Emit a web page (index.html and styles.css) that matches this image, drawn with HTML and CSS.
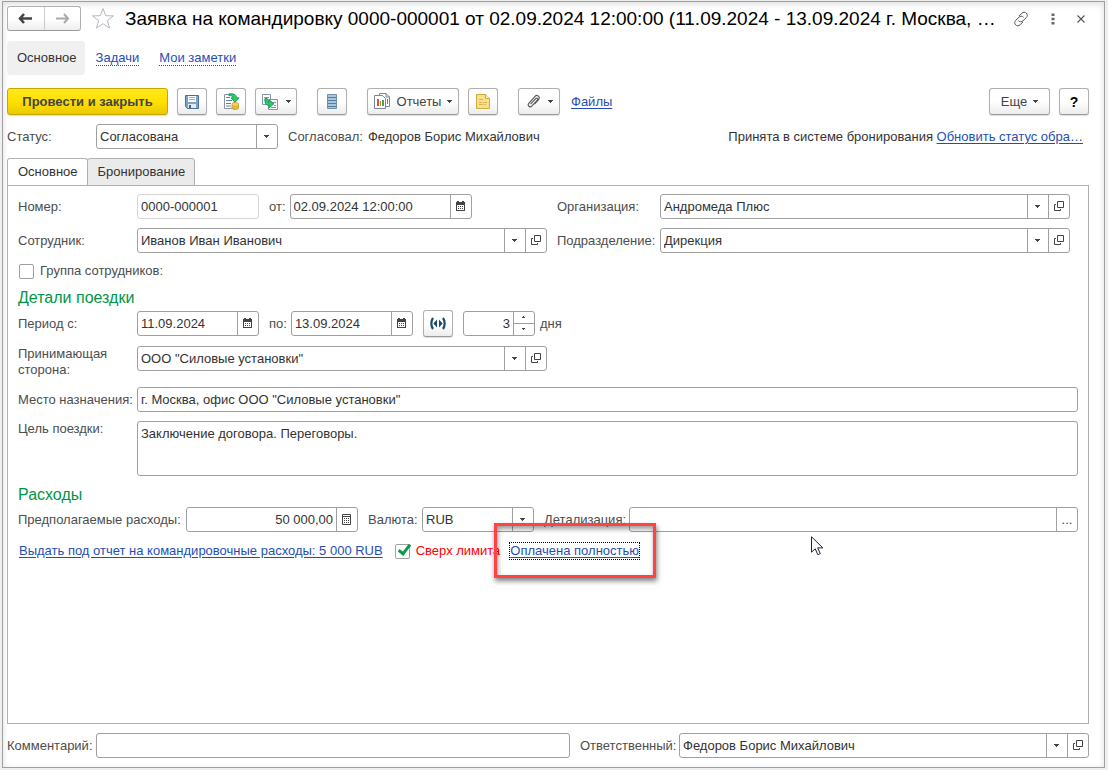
FILE: index.html
```html
<!DOCTYPE html>
<html lang="ru">
<head>
<meta charset="utf-8">
<title>Заявка на командировку</title>
<meta name="viewport" content="width=device-width, initial-scale=1">
<link rel="stylesheet" href="styles.css">
</head>
<body>
<svg class="sprite" aria-hidden="true">
  <symbol id="i-down" viewBox="0 0 5 5"><path d="M0 1h5v1H0zM1 2h3v1H1zM2 3h1v1H2z" fill="#444"/></symbol>
  <symbol id="i-open" viewBox="0 0 10 11"><path d="M3.500 .5h6v6h-6zM2 3.500H.5v6h6V8" fill="none" stroke="#444" stroke-width="1"/></symbol>
  <symbol id="i-cal" viewBox="0 0 10 11"><path d="M0 1h9v9H0zM1 4v5h7V4z" fill="#444" fill-rule="evenodd"/><path d="M1 0h2v2H1zM6 0h2v2H6z" fill="#444"/><path d="M2 5h1v1H2zM4 5h1v1H4zM6 5h1v1H6zM2 7h1v1H2zM4 7h1v1H4zM6 7h1v1H6z" fill="#444"/></symbol>
  <symbol id="i-calc" viewBox="0 0 10 11"><path d="M.5 .5h8v10h-8zM.5 2.500h8" fill="none" stroke="#444"/><path d="M2 4h1v1H2zM4 4h1v1H4zM6 4h1v1H6zM2 6h1v1H2zM4 6h1v1H4zM6 6h1v1H6zM2 8h1v1H2zM4 8h1v1H4zM6 8h1v1H6z" fill="#444"/></symbol>
</svg>

<main class="window">
  <header class="titlebar">
    <div class="history">
      <button class="history-btn" aria-label="Назад"><svg width="15" height="11" viewBox="0 0 15 11"><path d="M6 1 2 5.500l4 4.500M2 5.500h12" fill="none" stroke="#444" stroke-width="2.600"/></svg></button>
      <button class="history-btn" aria-label="Вперед"><svg width="15" height="11" viewBox="0 0 15 11"><path d="m9 1 4 4.500L9 10M13 5.500H1" fill="none" stroke="#aaa" stroke-width="2"/></svg></button>
    </div>
    <button class="plain star" aria-label="В избранное"><svg width="24" height="23" viewBox="0 0 24 23"><path d="m12 1.500 2.700 7.200 7.800.2-6.200 4.700 2.300 7.500L12 16.700l-6.600 4.400 2.300-7.500L1.500 8.900l7.800-.2z" fill="#fff" stroke="#b4b9c1"/></svg></button>
    <h1 class="title">Заявка на командировку 0000-000001 от 02.09.2024 12:00:00 (11.09.2024 - 13.09.2024 г. Москва, …</h1>
    <div class="title-tools">
      <button class="plain" aria-label="Получить ссылку"><svg width="16" height="16" viewBox="0 0 16 16"><g fill="none" stroke="#555" stroke-linecap="round"><path d="M6.300 4.800 8.900 2.200c1.300-1.300 3.300-1.300 4.500-.1s1.200 3.200-.1 4.500L10 9.800c-1.300 1.300-3.200 1.300-4.300.2"/><path d="M9.700 11.200l-2.600 2.600c-1.300 1.300-3.300 1.300-4.500.1s-1.200-3.200.1-4.500L6 6.200c1.300-1.300 3.200-1.300 4.300-.2"/></g></svg></button>
      <button class="plain" aria-label="Меню"><svg width="4" height="12" viewBox="0 0 4 12"><path d="M.5 .5h3v2.500h-3zM.5 4.700h3v2.500h-3zM.5 9h3v2.500h-3z" fill="#666"/></svg></button>
      <button class="plain" aria-label="Закрыть"><svg width="8" height="8" viewBox="0 0 8 8"><path d="m.5.5 7 7m0-7-7 7" stroke="#555" stroke-width="1.100"/></svg></button>
    </div>
  </header>

  <nav class="sections">
    <span class="section-current">Основное</span>
    <a class="section-link" href="#tasks">Задачи</a>
    <a class="section-link" href="#notes">Мои заметки</a>
  </nav>

  <div class="toolbar">
    <div class="group">
      <button class="btn btn-main">Провести и закрыть</button>
      <button class="btn btn-icon" aria-label="Записать"><svg width="16" height="16" viewBox="0 0 16 16"><path d="M1.500 1.500h13v13h-11l-2-2z" fill="#7ba3cc" stroke="#4a7096"/><path d="M4 2h8v6H4z" fill="#fff"/><path d="M5 3.500h6M5 5.500h6" stroke="#8fa9c2"/><path d="M4 10h8v4H4z" fill="#e4ebf2"/><path d="M5 11h2v3H5z" fill="#3f6488"/></svg></button>
      <button class="btn btn-icon" aria-label="Провести"><svg width="17" height="17" viewBox="0 0 17 17"><path d="M1.500 1.500h10v14h-10z" fill="#fff" stroke="#8496a9"/><path d="M3 4.500h4M3 7.500h6M3 10.500h5M3 13h5" stroke="#6e8297"/><path d="M6 .8c4-.6 7.200.6 7.700 4H16l-4 4.600L8 4.800h2.300C9.900 3 8.300 2.500 6 2.800z" fill="#24cf6b" stroke="#138a4b" stroke-width=".8"/><path d="M9 11c0-2 6.500-2 6.500 0v4c0 2-6.500 2-6.500 0z" fill="#f4d160" stroke="#c59a20" stroke-width=".8"/><path d="M9 12.500c1 1.300 5.500 1.300 6.500 0M9 14.300c1 1.300 5.500 1.300 6.500 0" fill="none" stroke="#c59a20" stroke-width=".8"/></svg></button>
      <button class="btn btn-menu" aria-label="Создать на основании"><svg width="18" height="18" viewBox="0 0 18 18"><path d="M1.500 1.500h8v10h-8z" fill="#fff" stroke="#8496a9"/><path d="M3 4.500h5M3 7h3" stroke="#8496a9"/><path d="M7.500 6.500h9v10h-9z" fill="#fff" stroke="#8496a9"/><path d="M12 9.500h3M13 12.500h2M10 14.500h5" stroke="#8496a9"/><path d="M4 5.500v2.800c0 2.600 1.500 4 4 4V15l5-4.300-5-4v2.500c-1.300 0-1.700-.6-1.700-1.700V5.500z" fill="#24cf6b" stroke="#138a4b" stroke-width=".8"/></svg><svg width="5" height="5"><use href="#i-down"/></svg></button>
    </div>
    <button class="btn btn-icon" aria-label="Журнал"><svg width="10" height="15" viewBox="0 0 10 15"><path d="M.5 .5h9v14h-9z" fill="#a9c6dc" stroke="#6b91ae"/><path d="M1 3.500h8M1 6.500h8M1 9.500h8M1 12.500h8" stroke="#547c9c"/></svg></button>
    <div class="group">
      <button class="btn btn-reports"><svg width="17" height="17" viewBox="0 0 17 17"><path d="M5.500 .5H12l3.500 3.500v9.500h-10z" fill="#fff" stroke="#76889a"/><path d="M12 .5v3.500h3.500" fill="none" stroke="#76889a"/><path d="M13 6h1v5h-1z" fill="#37a852"/><path d="M.5 2.500h8l3 3v10H.5z" fill="#fff" stroke="#76889a"/><path d="M3 6h2v7H3z" fill="#df4b3e"/><path d="M6 8h1v5H6z" fill="#e07b37"/><path d="M8 7h2v6H8z" fill="#37a852"/></svg>Отчеты<svg width="5" height="5"><use href="#i-down"/></svg></button>
      <button class="btn btn-icon" aria-label="Заметка"><svg width="14" height="15" viewBox="0 0 14 15"><path d="M.5 .5h9l4 4v10H.5z" fill="#f7df8c" stroke="#d1a93d"/><path d="M9.500 .5v4h4" fill="#fff0b8" stroke="#d1a93d"/><path d="M3 5.500h4M3 8.500h3m1 0h4M3 10.500h4m1 0h2" stroke="#d9b654"/></svg></button>
    </div>
    <div class="group">
      <button class="btn btn-menu" aria-label="Присоединенные файлы"><svg width="15" height="15" viewBox="0 0 15 15"><path d="M4.600 10.200 9.700 4.600c1-1.100 2.600.3 1.600 1.500l-5.500 6.100c-1.700 1.800-4.800-.8-3-2.900l6.300-7c2-2.200 5.500.7 3.500 3.200L8.500 10" fill="none" stroke="#5a5a5a" stroke-width="1.200"/></svg><svg width="5" height="5"><use href="#i-down"/></svg></button>
      <a class="link files" href="#files">Файлы</a>
    </div>
    <div class="group toolbar-end">
      <button class="btn btn-more">Еще<svg width="5" height="5"><use href="#i-down"/></svg></button>
      <button class="btn btn-icon btn-help">?</button>
    </div>
  </div>

  <div class="status">
    <label class="status-label" for="status">Статус:</label>
    <div class="field w-date-long">
      <div class="pick"><select id="status"><option>Согласована</option></select><svg class="pick-icon" width="5" height="5"><use href="#i-down"/></svg></div>
    </div>
    <span class="status-approved"><span class="muted">Согласовал:</span><span>Федоров Борис Михайлович</span></span>
    <span class="status-booking">Принята в системе бронирования <a class="link" href="#refresh">Обновить статус обра…</a></span>
  </div>

  <div class="tabs" role="tablist">
    <button class="tab tab-active" role="tab" aria-selected="true">Основное</button>
    <button class="tab" role="tab" aria-selected="false">Бронирование</button>
  </div>

  <section class="panel">
    <div class="pairs">
      <label for="number">Номер:</label>
      <div class="line">
        <div class="field field-locked w-date"><input id="number" value="0000-000001" readonly></div>
        <label for="date">от:</label>
        <div class="field w-date-long"><input id="date" value="02.09.2024 12:00:00"><button class="side" aria-label="Календарь"><svg width="10" height="11"><use href="#i-cal"/></svg></button></div>
      </div>
      <label class="second" for="org">Организация:</label>
      <div class="field">
        <div class="pick"><select id="org"><option>Андромеда Плюс</option></select><svg class="pick-icon" width="5" height="5"><use href="#i-down"/></svg></div>
        <button class="side" aria-label="Открыть"><svg width="10" height="11"><use href="#i-open"/></svg></button>
      </div>
      <label for="employee">Сотрудник:</label>
      <div class="field">
        <div class="pick"><select id="employee"><option>Иванов Иван Иванович</option></select><svg class="pick-icon" width="5" height="5"><use href="#i-down"/></svg></div>
        <button class="side" aria-label="Открыть"><svg width="10" height="11"><use href="#i-open"/></svg></button>
      </div>
      <label class="second" for="dept">Подразделение:</label>
      <div class="field">
        <div class="pick"><select id="dept"><option>Дирекция</option></select><svg class="pick-icon" width="5" height="5"><use href="#i-down"/></svg></div>
        <button class="side" aria-label="Открыть"><svg width="10" height="11"><use href="#i-open"/></svg></button>
      </div>
    </div>

    <label class="check group-check"><input type="checkbox">Группа сотрудников:</label>

    <h2 class="heading">Детали поездки</h2>
    <div class="pairs">
      <label for="from">Период с:</label>
      <div class="line line-wide">
        <div class="field w-date"><input id="from" value="11.09.2024"><button class="side" aria-label="Календарь"><svg width="10" height="11"><use href="#i-cal"/></svg></button></div>
        <label for="to">по:</label>
        <div class="field w-date"><input id="to" value="13.09.2024"><button class="side" aria-label="Календарь"><svg width="10" height="11"><use href="#i-cal"/></svg></button></div>
        <button class="btn btn-icon btn-period" aria-label="Выбрать период"><svg width="16" height="13" viewBox="0 0 16 13"><path d="M3 1C.8 4 .8 9 3 12M13 1c2.200 3 2.200 8 0 11" fill="none" stroke="#1c4a6e" stroke-width="2.200"/><path d="M7 2.500v8L3.400 6.500zM9 2.500v8l3.600-4z" fill="#1c4a6e"/></svg></button>
        <div class="field w-days"><input id="days" class="num" value="3"><div class="spin"><button aria-label="Больше"><svg width="4" height="3" viewBox="0 0 4 3"><path d="M0 1h3v1H0zM1 0h1v1H1z" fill="#444"/></svg></button><button aria-label="Меньше"><svg width="4" height="3" viewBox="0 0 4 3"><path d="M0 0h3v1H0zM1 1h1v1H1z" fill="#444"/></svg></button></div></div>
        <label class="unit" for="days">дня</label>
      </div>
      <label class="label-top" for="host">Принимающая сторона:</label>
      <div class="field label-top">
        <div class="pick"><select id="host"><option>ООО "Силовые установки"</option></select><svg class="pick-icon" width="5" height="5"><use href="#i-down"/></svg></div>
        <button class="side" aria-label="Открыть"><svg width="10" height="11"><use href="#i-open"/></svg></button>
      </div>
    </div>

    <div class="wide">
      <label for="place">Место назначения:</label>
      <div class="field"><input id="place" value="г. Москва, офис ООО &quot;Силовые установки&quot;"></div>
      <label class="label-top" for="goal">Цель поездки:</label>
      <div class="field field-area"><textarea id="goal">Заключение договора. Переговоры.</textarea></div>
    </div>

    <h2 class="heading">Расходы</h2>
    <div class="costs">
      <label class="costs-label" for="sum">Предполагаемые расходы:</label>
      <div class="field w-sum"><input id="sum" class="num" value="50 000,00"><button class="side" aria-label="Калькулятор"><svg width="10" height="11"><use href="#i-calc"/></svg></button></div>
      <label class="currency-label" for="currency">Валюта:</label>
      <div class="field w-currency"><div class="pick"><select id="currency"><option>RUB</option></select><svg class="pick-icon" width="5" height="5"><use href="#i-down"/></svg></div></div>
      <label class="detail-label" for="detail">Детализация:</label>
      <div class="field grow"><input id="detail"><button class="side dots" aria-label="Выбрать">...</button></div>
    </div>
    <div class="payment">
      <a class="link" href="#advance">Выдать под отчет на командировочные расходы: 5 000 RUB</a>
      <label class="check over"><input type="checkbox" checked>Сверх лимита</label>
      <div class="paid"><a class="link link-focus" href="#paid">Оплачена полностью</a><span class="highlight"></span></div>
      <svg class="cursor" width="13" height="20" viewBox="0 0 13 20"><path d="M.5 .8v15.400l3.700-3.400 2.600 5.900 2.500-1.100-2.600-5.700h5.200z" fill="#fff" stroke="#223"/></svg>
    </div>
  </section>

  <footer class="footer">
    <label for="comment">Комментарий:</label>
    <div class="field"><input id="comment"></div>
    <label class="second" for="owner">Ответственный:</label>
    <div class="field">
      <div class="pick"><select id="owner"><option>Федоров Борис Михайлович</option></select><svg class="pick-icon" width="5" height="5"><use href="#i-down"/></svg></div>
      <button class="side" aria-label="Открыть"><svg width="10" height="11"><use href="#i-open"/></svg></button>
    </div>
  </footer>
</main>
</body>
</html>
```

FILE: styles.css
```css
*, *::before, *::after { box-sizing: border-box; }

body {
  margin: 0;
  padding: 1px 3px 2px 2px;
  min-height: 100vh;
  display: flex;
  background: #efefef;
  color: #333;
  font: 13px/16px "Liberation Sans", Arial, sans-serif;
}

button, input, select, textarea { font: inherit; color: inherit; margin: 0; }
button { padding: 0; cursor: pointer; }
svg { display: block; flex: none; }
label, .muted { color: #4d4d4d; }

.sprite { position: absolute; width: 0; height: 0; }

.window {
  flex: 1;
  min-width: 0;
  display: flex;
  flex-direction: column;
  padding: 4px 15px 9px 4px;
  background: #fff;
  border: 1px solid #a0a0a0;
  box-shadow: inset 0 2px 6px #ddd;
}

/* Title bar */
.titlebar { display: flex; align-items: center; height: 25px; }

.history {
  display: flex;
  width: 74px;
  height: 25px;
  border: 1px solid #b0b0b0;
  border-bottom-color: #999;
  border-radius: 3px;
  background: linear-gradient(#fff 50%, #eee);
}
.history-btn {
  flex: 1;
  display: grid;
  place-items: center;
  border: 0;
  background: none;
}
.history-btn + .history-btn { border-left: 1px solid #ccc; }

.plain { display: grid; place-items: center; border: 0; background: none; }
.star { margin: 0 10px; }

.title {
  flex: 1;
  min-width: 0;
  margin: 0;
  overflow: hidden;
  white-space: nowrap;
  text-overflow: ellipsis;
  font-size: 19px;
  line-height: 25px;
  font-weight: 400;
  color: #000;
}
.title-tools { display: flex; align-items: center; gap: 22px; padding: 0 4px 0 12px; }

/* Section links */
.sections { display: flex; align-items: center; gap: 20px; margin-top: 10px; }
.section-current {
  padding: 9px 8px 9px 10px;
  margin-right: -9px;
  border-radius: 4px;
  background: #f0f0f0;
}
.section-link {
  color: #1f4fb4;
  text-decoration: none;
  line-height: 14px;
  border-bottom: 1px dotted #1f4fb4;
}

.link { color: #1f4fb4; text-underline-offset: 2px; }

/* Toolbar */
.toolbar { display: flex; align-items: center; gap: 20px; margin-top: 13px; }
.group { display: flex; align-items: center; gap: 9px; }
.toolbar-end { margin-left: auto; }
.files { margin-left: 2px; }

.btn {
  display: flex;
  align-items: center;
  justify-content: center;
  height: 27px;
  border: 1px solid #b0b0b0;
  border-bottom-color: #999;
  border-radius: 3px;
  background: linear-gradient(#fff 50%, #ececec);
  box-shadow: 0 1px 1px #ddd;
  color: #444;
}
.btn-main {
  width: 161px;
  border-color: #c5a600;
  background: linear-gradient(#ffe81f, #ffe000 50%, #ecc900);
  font-weight: 700;
}
.btn-icon { width: 30px; }
.btn-menu { width: 42px; gap: 7px; }
.btn-reports { width: 92px; gap: 6px; }
.btn-more { width: 61px; gap: 6px; }
.btn-help { color: #000; font-weight: 700; font-size: 14px; }

/* Fields */
.field {
  display: flex;
  min-width: 0;
  height: 25px;
  border: 1px solid #a0a0a0;
  border-radius: 3px;
  background: #fff;
}
.field-locked { border-color: #d4d4d4; }
.field-area { height: 55px; }
.field input, .field select, .field textarea {
  flex: 1;
  width: 100%;
  min-width: 0;
  padding: 0 3px;
  border: 0;
  border-radius: 3px;
  background: none;
  outline: 0;
  appearance: none;
}
.field textarea { padding-top: 4px; resize: none; }
.field .num { text-align: right; }

.pick { flex: 1; min-width: 0; display: grid; grid-template-columns: minmax(0, 1fr) 21px; }
.pick select { grid-area: 1 / 1 / 2 / 3; }
.pick::after { content: ""; grid-area: 1 / 2; border-left: 1px solid #a0a0a0; pointer-events: none; }
.pick-icon { grid-area: 1 / 2; place-self: center; pointer-events: none; }

.side {
  flex: none;
  width: 21px;
  display: grid;
  place-items: center;
  border: 0;
  border-left: 1px solid #a0a0a0;
  background: none;
}
.spin { display: grid; grid-template-rows: 11px 12px; width: 21px; flex: none; border-left: 1px solid #a0a0a0; }
.spin button { display: grid; place-items: center; border: 0; background: none; }
.spin button + button { border-top: 1px solid #a0a0a0; }

.w-date { width: 122px; }
.w-date-long { width: 182px; }
.w-days { width: 72px; }
.w-sum { width: 172px; }
.w-currency { width: 112px; }
.grow { flex: 1; }

/* Status line */
.status { display: flex; align-items: center; margin-top: 9px; white-space: nowrap; }
.status-label { width: 89px; }
.status-approved { display: flex; gap: 5px; margin-left: 10px; }
.status-booking { margin-left: auto; padding-right: 6px; }

/* Tabs */
.tabs { display: flex; margin: 9px 0 -1px; }
.tab {
  height: 28px;
  padding: 0 9px 0 10px;
  border: 1px solid #b0b0b0;
  border-radius: 3px 3px 0 0;
  background: #ebebeb;
}
.tab + .tab { margin-left: -1px; }
.tab-active { background: #fff; border-bottom-color: #fff; }

.panel { flex: 1; padding: 8px 10px; border: 1px solid #b0b0b0; }

.pairs {
  display: grid;
  grid-template-columns: 119px minmax(0, 1fr) 113px minmax(0, 1fr);
  align-items: center;
  row-gap: 9px;
  padding-right: 8px;
}
.second { padding-left: 10px; }
.line { display: flex; align-items: center; }
.line label { margin: 0 4px 0 10px; }
.line-wide { grid-column: 2 / 5; }
.line .unit { margin-left: 5px; }
.btn-period { margin: 0 10px; }

.check { display: flex; align-items: center; gap: 6px; }
.check input {
  appearance: none;
  position: relative;
  width: 15px;
  height: 15px;
  margin: 0;
  border: 1px solid #a0a0a0;
  border-radius: 2px;
  background: #fff;
}
.check input:checked::after {
  content: "";
  position: absolute;
  left: 5px;
  top: -3px;
  width: 7px;
  height: 13px;
  border: solid #0c9a48;
  border-width: 0 3px 3px 0;
  transform: rotate(38deg);
}
.group-check { width: max-content; margin: 10px 0 0 1px; }

.heading {
  margin: 9px 0 2px;
  font-size: 16px;
  line-height: 20px;
  font-weight: 400;
  color: #009646;
}

.wide {
  display: grid;
  grid-template-columns: 119px minmax(0, 1fr);
  align-items: center;
  row-gap: 9px;
  margin-top: 9px;
}
.label-top { align-self: start; }

.costs { display: flex; align-items: center; white-space: nowrap; }
.costs-label { width: 168px; }
.currency-label { width: 64px; padding-left: 10px; }
.detail-label { width: 95px; padding-left: 10px; }
.dots { color: #444; }

.payment { position: relative; display: flex; align-items: center; margin: 11px 0 0 1px; white-space: nowrap; }
.over { margin-left: 12px; color: #f00; }
.paid { position: relative; margin-left: 10px; }
.link-focus { display: block; outline: 1px dotted #000; }

/* Callout frame drawn over the form */
.highlight {
  position: absolute;
  inset: -20px -17px -19px -16px;
  border: 3px solid #ff4343;
  box-shadow: 1px 3px 5px rgba(0, 0, 0, .5), inset 1px 3px 5px rgba(0, 0, 0, .4);
  pointer-events: none;
}
.cursor { position: absolute; left: 792px; top: -7px; pointer-events: none; }

/* Footer */
.footer {
  display: grid;
  grid-template-columns: 89px minmax(0, 474fr) 109px minmax(0, 410fr);
  align-items: center;
  margin-top: 9px;
}
```
